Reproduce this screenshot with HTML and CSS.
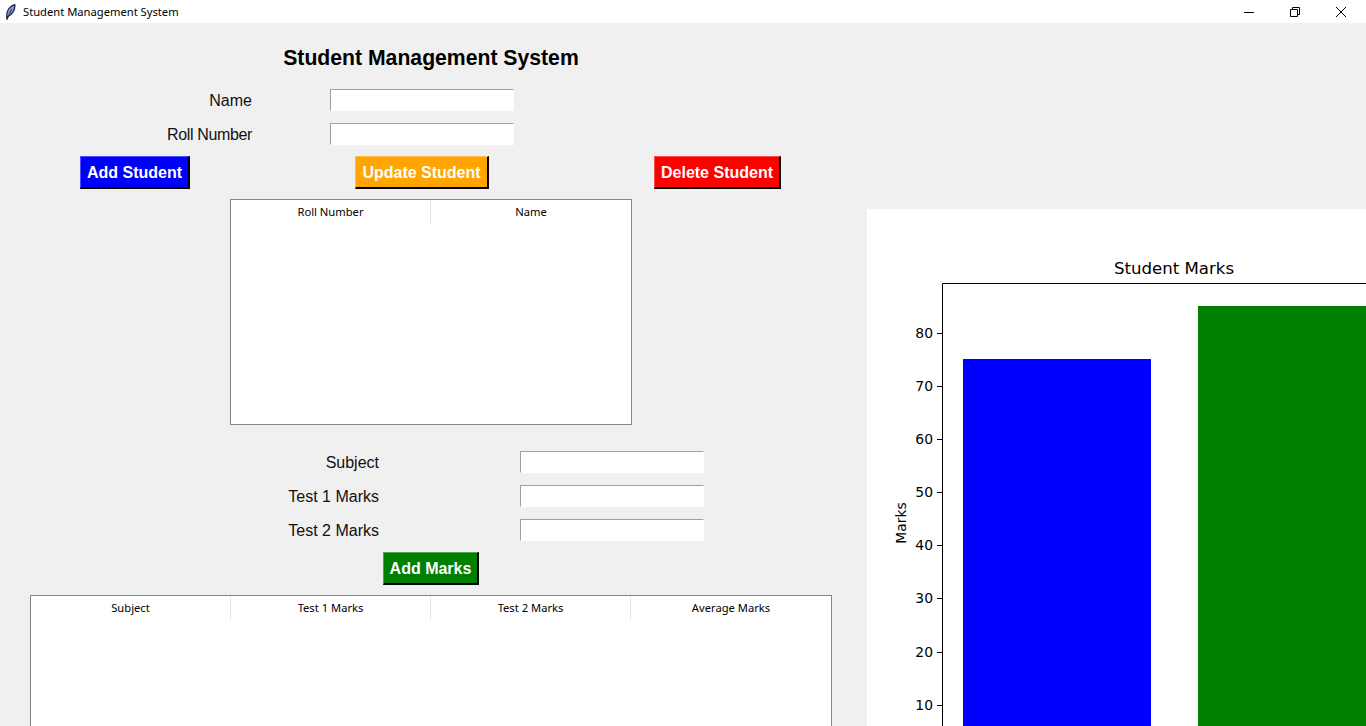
FILE: index.html
```html
<!DOCTYPE html>
<html lang="en">
<head>
    <meta charset="UTF-8">
    <title>Student Management System</title>
    <link rel="stylesheet" href="styles.css">
</head>
<body>
    <div class="titlebar">
        <svg class="app-icon" width="16" height="16" viewBox="0 0 16 16">
            <path d="M3 15 C2.5 12 2.5 8 4.5 5 C6 3 8.5 1 10.8 0.6 C11.2 3 10.5 6 8.8 8.5 C7.5 10.5 5.5 12 4 12.5 Z" fill="#7d94cf" stroke="#141c33" stroke-width="1.1"/>
            <path d="M3 15.5 L7.5 5.5" stroke="#141c33" stroke-width="0.8"/>
        </svg>
        <span class="app-name">Student Management System</span>
        <div class="win-controls">
            <svg class="win-btn" width="12" height="12" viewBox="0 0 12 12"><path d="M1 6.5 H11" stroke="#000" stroke-width="1"/></svg>
            <svg class="win-btn" width="12" height="12" viewBox="0 0 12 12"><path d="M1.5 3.5 H8.5 V10.5 H1.5 Z M3.5 3.5 V1.5 H10.5 V8.5 H8.5" fill="none" stroke="#000" stroke-width="1"/></svg>
            <svg class="win-btn" width="12" height="12" viewBox="0 0 12 12"><path d="M1 1 L11 11 M11 1 L1 11" stroke="#000" stroke-width="1"/></svg>
        </div>
    </div>

    <div class="app">
        <div class="main">
            <h1 class="heading">Student Management System</h1>

            <div class="form form-student">
                <label>Name</label>
                <input type="text">
                <label class="tight">Roll Number</label>
                <input type="text">
            </div>

            <div class="actions">
                <button class="btn btn-blue">Add Student</button>
                <button class="btn btn-orange">Update Student</button>
                <button class="btn btn-red">Delete Student</button>
            </div>

            <div class="tree tree-students">
                <div class="tree-head">
                    <div>Roll Number</div>
                    <div>Name</div>
                </div>
            </div>

            <div class="form form-marks">
                <label>Subject</label>
                <input type="text">
                <label>Test 1 Marks</label>
                <input type="text">
                <label>Test 2 Marks</label>
                <input type="text">
            </div>

            <div class="marks-action">
                <button class="btn btn-green">Add Marks</button>
            </div>

            <div class="tree tree-marks">
                <div class="tree-head">
                    <div>Subject</div>
                    <div>Test 1 Marks</div>
                    <div>Test 2 Marks</div>
                    <div>Average Marks</div>
                </div>
            </div>
        </div>

        <div class="chart">
            <svg width="499" height="517" viewBox="867 209 499 517">
                <text class="chart-title" x="1174" y="274" text-anchor="middle">Student Marks</text>
                <rect x="963" y="359" width="188" height="367" fill="#0000ff"/>
                <rect x="1198" y="306" width="168" height="420" fill="#008000"/>
                <path d="M942.5 726 V283.5 H1366" fill="none" stroke="#000" stroke-width="1"/>
                <g stroke="#000" stroke-width="1">
                    <path d="M937 333.5 H942"/>
                    <path d="M937 386.5 H942"/>
                    <path d="M937 439.5 H942"/>
                    <path d="M937 492.5 H942"/>
                    <path d="M937 545.5 H942"/>
                    <path d="M937 598.5 H942"/>
                    <path d="M937 652.5 H942"/>
                    <path d="M937 705.5 H942"/>
                </g>
                <g class="chart-tick" text-anchor="end">
                    <text x="933" y="338">80</text>
                    <text x="933" y="391">70</text>
                    <text x="933" y="444">60</text>
                    <text x="933" y="497">50</text>
                    <text x="933" y="550">40</text>
                    <text x="933" y="603">30</text>
                    <text x="933" y="657">20</text>
                    <text x="933" y="710">10</text>
                </g>
                <text class="chart-tick" x="906" y="523" text-anchor="middle" transform="rotate(-90 906 523)">Marks</text>
            </svg>
        </div>
    </div>
</body>
</html>
```

FILE: styles.css
```css
* {
    box-sizing: border-box;
}
html, body {
    margin: 0;
    height: 100%;
    overflow: hidden;
}
body {
    font-family: "Liberation Sans", Arial, sans-serif;
    background-color: #f0f0f0;
    color: #000;
}

/* window title bar */
.titlebar {
    display: flex;
    align-items: center;
    height: 23px;
    background-color: #fff;
    padding-left: 4px;
}
.app-icon {
    flex: none;
}
.app-name {
    font-family: "Noto Sans", sans-serif;
    font-size: 11.2px;
    margin-left: 3px;
}
.win-controls {
    display: flex;
    margin-left: auto;
    padding-right: 19px;
    gap: 34px;
}

/* layout */
.app {
    display: flex;
    height: 703px;
}
.main {
    width: 867px;
    flex: none;
}
.heading {
    width: 862px;
    margin: 23px 0 0;
    font-size: 21.2px;
    line-height: 24px;
    text-align: center;
}

/* forms */
.form {
    display: grid;
    row-gap: 12px;
    font-size: 16px;
}
.form label {
    height: 22px;
    text-align: right;
    line-height: 24px;
    color: #111;
}
.form label.tight {
    letter-spacing: -0.35px;
}
.form input {
    width: 184px;
    height: 22px;
    padding: 0;
    background-color: #fff;
    border: 1px solid;
    border-color: #a0a0a0 #fff #fff #a0a0a0;
    outline: none;
}
.form-student {
    grid-template-columns: 252px 184px;
    column-gap: 78px;
    margin-top: 19px;
}
.form-marks {
    grid-template-columns: 379px 184px;
    column-gap: 141px;
    margin-top: 26px;
}

/* buttons */
.actions {
    display: grid;
    grid-template-columns: 270px 304px 287px;
    justify-items: center;
    margin-top: 11px;
}
.marks-action {
    width: 862px;
    display: flex;
    justify-content: center;
    margin-top: 11px;
}
.btn {
    display: block;
    height: 33px;
    padding: 2px 0 0;
    border-style: solid;
    border-width: 1px 2px 2px 1px;
    font-family: "Liberation Sans", Arial, sans-serif;
    font-size: 16px;
    font-weight: bold;
    color: #fff;
}
.btn-blue {
    width: 110px;
    background-color: #0000ff;
    border-color: #4d4dff #000 #000 #4d4dff;
}
.btn-orange {
    width: 134px;
    background-color: #ffa500;
    border-color: #ffc04d #000 #000 #ffc04d;
}
.btn-red {
    width: 127px;
    background-color: #ff0000;
    border-color: #ff4d4d #000 #000 #ff4d4d;
}
.btn-green {
    width: 96px;
    background-color: #008000;
    border-color: #4da64d #000 #000 #4da64d;
}

/* tables */
.tree {
    background-color: #fff;
    border: 1px solid #858585;
}
.tree-students {
    width: 402px;
    height: 226px;
    margin: 10px 0 0 230px;
}
.tree-marks {
    width: 802px;
    height: 131px;
    margin: 10px 0 0 30px;
    border-bottom: none;
}
.tree-head {
    display: flex;
    height: 24px;
    font-family: "Noto Sans", sans-serif;
    font-size: 11.2px;
    line-height: 24px;
    text-align: center;
}
.tree-head div {
    width: 200px;
    border-right: 1px solid #e5e5e5;
}
.tree-head div:last-child {
    border-right: none;
}

/* chart */
.chart {
    margin-top: 186px;
    width: 499px;
    height: 517px;
    background-color: #fff;
}
.chart svg {
    display: block;
}
.chart-title {
    font-family: "DejaVu Sans", sans-serif;
    font-size: 16.6px;
}
.chart-tick {
    font-family: "DejaVu Sans", sans-serif;
    font-size: 13.9px;
}
```
